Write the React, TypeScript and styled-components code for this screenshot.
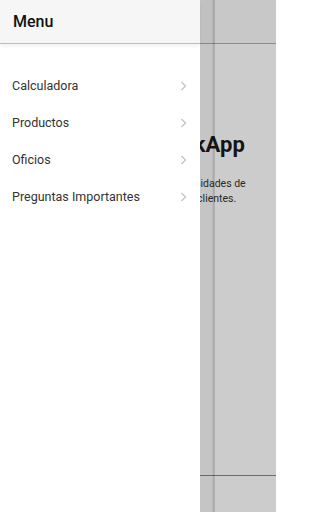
import React from "react";
import styled, { createGlobalStyle } from "styled-components";

const Global = createGlobalStyle`
  html, body { margin: 0; padding: 0; overflow: hidden; }
  body { font-family: Roboto, "Noto Sans", Arial, sans-serif; background: #fff; }
  * { box-sizing: border-box; }
`;

const Screen = styled.div`
  position: relative;
  width: 100vw;
  max-width: 276px;
  height: 512px;
  overflow: hidden;
  background: #fff;
`;

const Page = styled.div`
  display: flex;
  flex-direction: column;
  height: 100%;
`;

const PageHeader = styled.div`
  height: 44px;
  flex: 0 0 44px;
  background: #fafafa;
  border-bottom: 1px solid #b0b0b0;
`;

const PageContent = styled.div`
  flex: 1;
  display: flex;
  flex-direction: column;
  align-items: center;
  padding: 88px 0 0;
  text-align: center;
  overflow: hidden;
`;

const Title = styled.h1`
  margin: 0;
  font-size: 22px;
  font-weight: 700;
  color: #1a1a1a;
  white-space: nowrap;
  line-height: 26px;
`;

const Lead = styled.p`
  margin: 18px 0 0;
  font-size: 10.5px;
  line-height: 15px;
  color: #333;
  white-space: nowrap;
`;

const PageFooter = styled.div`
  height: 37px;
  flex: 0 0 37px;
  background: #fff;
  border-top: 1px solid #888;
`;

const Backdrop = styled.div`
  position: absolute;
  inset: 0;
  background: rgba(0, 0, 0, 0.2);
`;

const Drawer = styled.nav`
  position: absolute;
  top: 0;
  left: 0;
  bottom: 0;
  width: 200px;
  background: #fff;
  display: flex;
  flex-direction: column;

  &::after {
    content: "";
    position: absolute;
    top: 0;
    bottom: 0;
    right: -15px;
    width: 15px;
    background: linear-gradient(
      to right,
      rgba(0, 0, 0, 0.03) 0%,
      rgba(0, 0, 0, 0.04) 80%,
      rgba(0, 0, 0, 0.16) 88%,
      rgba(0, 0, 0, 0.16) 96%,
      rgba(0, 0, 0, 0) 100%
    );
  }
`;

const DrawerHeader = styled.header`
  height: 44px;
  flex: 0 0 44px;
  display: flex;
  align-items: center;
  padding: 0 13px;
  background: #f6f6f6;
  border-bottom: 1px solid #bdbdbd;
  box-shadow: 0 2px 4px rgba(0, 0, 0, 0.06);
`;

const DrawerTitle = styled.div`
  font-size: 16px;
  font-weight: 500;
  color: #111;
`;

const List = styled.ul`
  list-style: none;
  margin: 0;
  padding: 23px 0 0;
`;

const Item = styled.li`
  height: 37px;
  display: flex;
  align-items: center;
  justify-content: space-between;
  padding: 0 13px 0 12px;
  font-size: 12.5px;
  color: #333;
`;

const Chevron = styled.svg`
  width: 7px;
  height: 10px;
  flex: 0 0 auto;
`;

const items = ["Calculadora", "Productos", "Oficios", "Preguntas Importantes"];

export default function App() {
  return (
    <Screen>
      <Global />
      <Page>
        <PageHeader />
        <PageContent>
          <Title>Bienvenido a LinkApp</Title>
          <Lead>
            Una aplicación, para cubrir las necesidades de
            <br />
            todos nuestros queridos valiosos clientes.
          </Lead>
        </PageContent>
        <PageFooter />
      </Page>
      <Backdrop />
      <Drawer>
        <DrawerHeader>
          <DrawerTitle>Menu</DrawerTitle>
        </DrawerHeader>
        <List>
          {items.map((label) => (
            <Item key={label}>
              <span>{label}</span>
              <Chevron viewBox="0 0 7 10">
                <path d="M1.5 1 L5.5 5 L1.5 9" fill="none" stroke="#c4c4c4" strokeWidth="1.3" />
              </Chevron>
            </Item>
          ))}
        </List>
      </Drawer>
    </Screen>
  );
}
